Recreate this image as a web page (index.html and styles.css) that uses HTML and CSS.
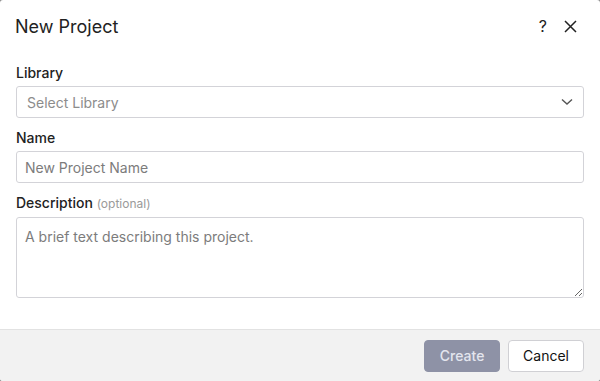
FILE: index.html
```html
<!DOCTYPE html>
<html lang="en">
<head>
    <meta charset="UTF-8">
    <title>New Project</title>
    <link rel="stylesheet" href="styles.css">
</head>
<body>
    <div class="dialog">
        <header class="dialog-head">
            <h1>New Project</h1>
            <div class="head-tools">
                <span class="help">?</span>
                <svg class="close" width="13" height="13" viewBox="0 0 13 13">
                    <path d="M1 1 L12 12 M12 1 L1 12" stroke="#222" stroke-width="1.5" fill="none"/>
                </svg>
            </div>
        </header>

        <form class="dialog-body">
            <label class="field-label">Library</label>
            <div class="select">
                <span>Select Library</span>
                <svg width="12" height="8" viewBox="0 0 12 8">
                    <path d="M1 1.5 L6 6 L11 1.5" stroke="#555" stroke-width="1.4" fill="none"/>
                </svg>
            </div>

            <label class="field-label">Name</label>
            <input class="input" type="text" placeholder="New Project Name">

            <label class="field-label">Description <span class="optional">(optional)</span></label>
            <textarea class="input area" placeholder="A brief text describing this project."></textarea>
        </form>

        <footer class="dialog-foot">
            <button class="btn primary" disabled>Create</button>
            <button class="btn">Cancel</button>
        </footer>
    </div>
</body>
</html>
```

FILE: styles.css
```css
html, body {
    margin: 0;
    height: 100%;
    background: #8a8a8a;
}

body {
    font-family: Inter, "Noto Sans", sans-serif;
    color: #222;
}

.dialog {
    height: 100%;
    background: #fff;
    border-radius: 3px;
    display: flex;
    flex-direction: column;
    overflow: hidden;
}

.dialog-head {
    height: 52px;
    display: flex;
    align-items: center;
    justify-content: space-between;
    padding: 0 23px 0 15px;
}

.dialog-head h1 {
    margin: 0;
    font-size: 18px;
    font-weight: 400;
    color: #222;
}

.head-tools {
    display: flex;
    align-items: center;
    gap: 17px;
}

.help {
    font-size: 16px;
    color: #222;
}

.close {
    display: block;
}

.dialog-body {
    flex: 1;
    display: flex;
    flex-direction: column;
    padding: 10px 16px 0;
}

.field-label {
    font-size: 14px;
    font-weight: 500;
    line-height: 20px;
    padding-top: 1px;
    margin-bottom: 3px;
}

.optional {
    font-size: 12px;
    font-weight: 400;
    color: #9a9a9a;
}

.select,
.input {
    box-sizing: border-box;
    height: 32px;
    border: 1px solid #d3d3d8;
    border-radius: 3px;
    margin: 0 0 9px;
    font-family: inherit;
    font-size: 14px;
    color: #222;
    background: #fff;
}

.select {
    display: flex;
    align-items: center;
    justify-content: space-between;
    padding: 0 10px 0 10px;
    color: #8c8c8c;
}

.input {
    padding: 0 8px;
    width: 100%;
}

.input::placeholder {
    color: #7c7c7c;
}

.area {
    height: 81px;
    padding: 10px 8px 8px;
    resize: vertical;
    line-height: 18px;
}

.dialog-foot {
    height: 52px;
    box-sizing: border-box;
    border-top: 1px solid #e2e2e2;
    background: #f2f2f2;
    display: flex;
    align-items: center;
    justify-content: flex-end;
    gap: 8px;
    padding: 0 16px;
}

.btn {
    height: 32px;
    padding: 0 14px;
    border-radius: 4px;
    border: 1px solid #d0d0d4;
    background: #fff;
    font-family: inherit;
    font-size: 14px;
    color: #111;
}

.btn.primary {
    width: 76px;
    background: #8e92a6;
    border-color: #8e92a6;
    color: #e3e5ee;
    font-weight: 500;
}
```
